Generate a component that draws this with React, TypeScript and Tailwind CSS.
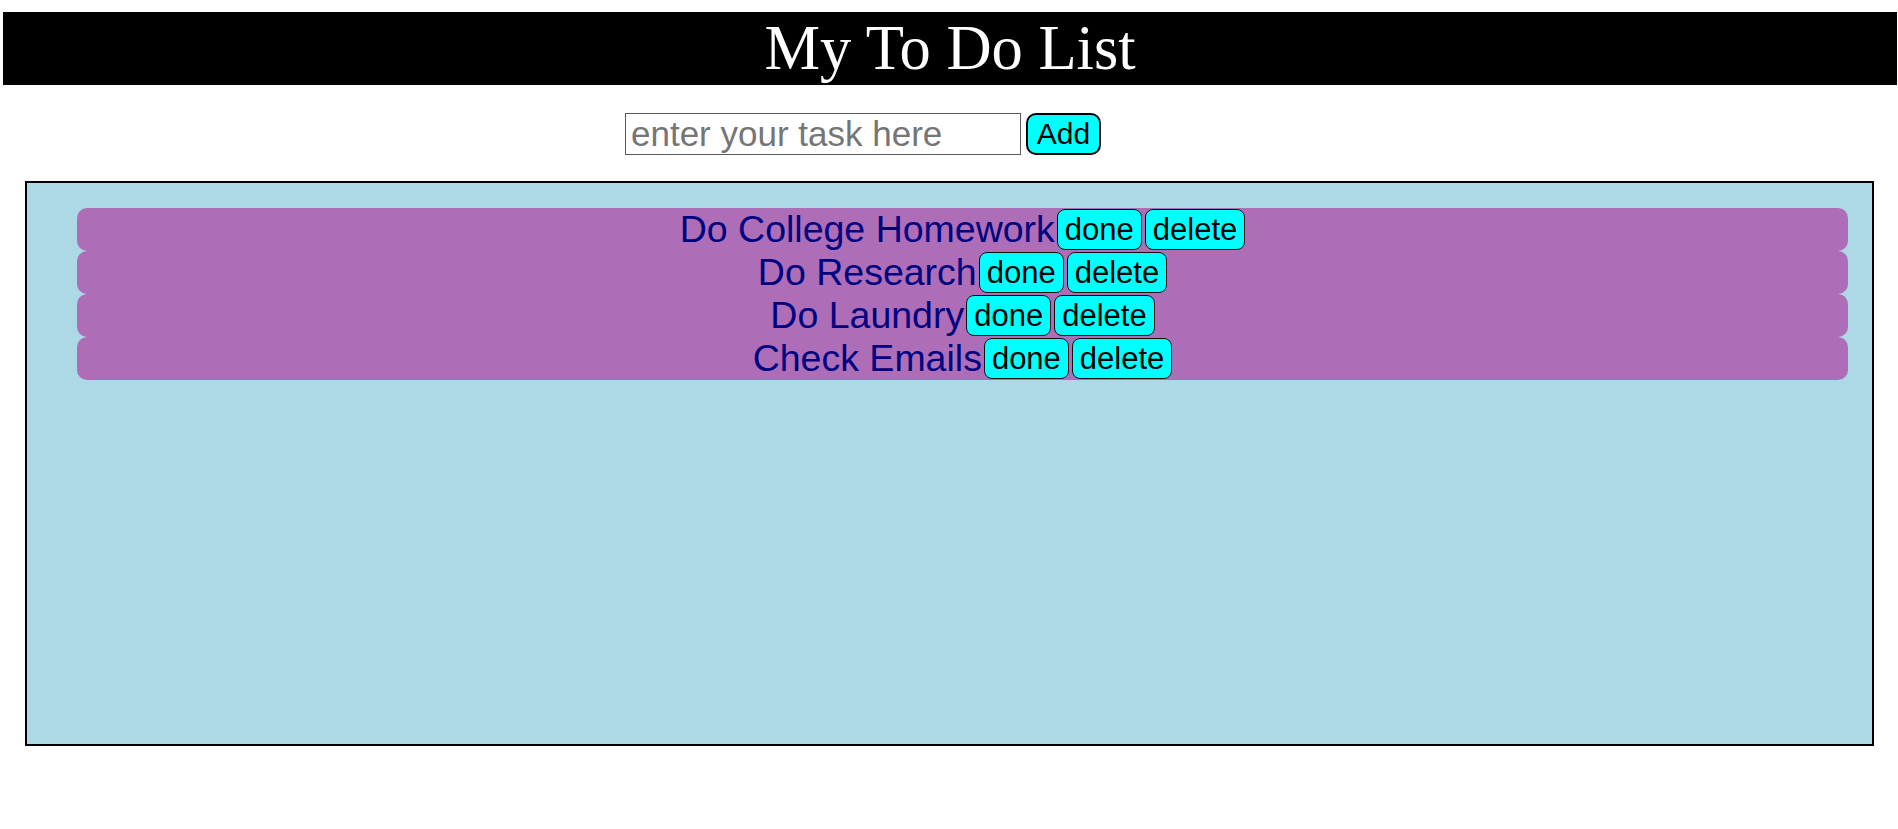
import React from "react";

const tasks = ["Do College Homework", "Do Research", "Do Laundry", "Check Emails"];

export default function App() {
  return (
    <div className="w-[1898px] h-[829px] bg-white font-['Liberation_Sans',Arial,sans-serif]">
      <div className="pt-[12px]">
        <div className="ml-[3px] w-[1894px] h-[73px] bg-black flex items-center justify-center text-white text-[62.5px] leading-none font-['Liberation_Serif','Times_New_Roman',serif]">
          My To Do List
        </div>
      </div>
      <div className="mt-[28px] flex items-center pl-[625px] gap-[5px]">
        <input
          className="w-[396px] h-[42px] border border-[#5a5a5a] px-[5px] text-[35px] leading-none text-black outline-none placeholder:text-[#757575] font-['Liberation_Sans',Arial,sans-serif]"
          placeholder="enter your task here"
        />
        <button className="h-[42px] w-[75px] bg-[#00ffff] border-2 border-black rounded-[10px] text-[30px] leading-none text-black flex items-center justify-center">
          Add
        </button>
      </div>
      <div className="mt-[26px] ml-[25px] w-[1849px] h-[565px] border-2 border-black bg-[#add8e6] pt-[25px] pl-[50px] pr-[24px]">
        {tasks.map((t) => (
          <div
            key={t}
            className="h-[43px] bg-[#ad6eb7] rounded-[10px] flex items-center justify-center"
          >
            <span className="text-[37.5px] leading-none text-[#000080]">{t}</span>
            <button className="ml-[2px] h-[41px] px-[7px] bg-[#00ffff] border-[1.5px] border-[#111] rounded-[8px] text-[31px] leading-none text-black">
              done
            </button>
            <button className="ml-[3px] h-[41px] px-[7px] bg-[#00ffff] border-[1.5px] border-[#111] rounded-[8px] text-[31px] leading-none text-black">
              delete
            </button>
          </div>
        ))}
      </div>
    </div>
  );
}
